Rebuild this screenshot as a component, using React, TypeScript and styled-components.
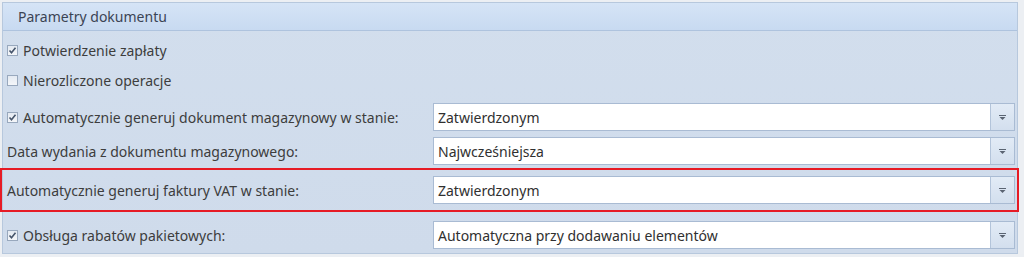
import React from "react";
import styled, { createGlobalStyle } from "styled-components";

const GlobalStyle = createGlobalStyle`
  html, body {
    margin: 0;
    padding: 0;
    background: #eceff3;
  }
  body {
    font-family: "Noto Sans", "Open Sans", sans-serif;
    font-size: 14px;
    color: #3d3d3d;
  }
`;

const Page = styled.div`
  width: 1024px;
  height: 257px;
  padding: 2px 0 0 2px;
  box-sizing: border-box;
`;

const Panel = styled.section`
  width: 1016px;
  height: 252px;
  box-sizing: border-box;
  border: 1px solid #b7c8dd;
  background: linear-gradient(180deg, #d2deed 0%, #cfdbeb 100%);
  display: flex;
  flex-direction: column;
`;

const Header = styled.div`
  height: 28px;
  box-sizing: border-box;
  padding-left: 15px;
  display: flex;
  align-items: center;
  background: linear-gradient(180deg, #d5e4f6 0%, #c8daf1 100%);
  border-bottom: 1px solid #aec3de;
  font-size: 14px;
  color: #3b4454;
`;

const Body = styled.div`
  display: flex;
  flex-direction: column;
  padding-top: 4px;
`;

interface RowProps {
  h: number;
  highlighted?: boolean;
}

const Row = styled.div<RowProps>`
  height: ${(p) => p.h}px;
  box-sizing: border-box;
  display: grid;
  grid-template-columns: 430px 1fr;
  align-items: center;
  padding-right: 2px;
  ${(p) =>
    p.highlighted &&
    `
    border: 2px solid #e61b25;
    margin: 0 -2px 0 -3px;
    padding-right: 2px;
    padding-left: 1px;
  `}
`;

const Label = styled.label`
  display: flex;
  align-items: center;
  gap: 5px;
  padding-left: 4px;
  font-size: 14px;
  white-space: nowrap;
`;

const Check = styled.span`
  width: 11px;
  height: 11px;
  box-sizing: border-box;
  border: 1px solid #98a8bd;
  background: linear-gradient(180deg, #e4eaf2 0%, #f4f6f9 100%);
  display: inline-flex;
  align-items: center;
  justify-content: center;
`;

const Combo = styled.div`
  height: 28px;
  box-sizing: border-box;
  border: 1px solid #a9bbd3;
  background: #fff;
  display: flex;
  align-items: stretch;
`;

const ComboText = styled.div`
  flex: 1;
  display: flex;
  align-items: center;
  padding-left: 4px;
  font-size: 14px;
  color: #303030;
  white-space: nowrap;
`;

const DropButton = styled.div`
  width: 23px;
  border-left: 1px solid #b3c4da;
  background: linear-gradient(180deg, #e2ebf6 0%, #d3dfee 100%);
  display: flex;
  align-items: center;
  justify-content: center;
`;

const CheckMark = () => (
  <svg width="9" height="9" viewBox="0 0 9 9">
    <path d="M1.5 4.5 L3.5 6.8 L7.5 1.8" fill="none" stroke="#45546a" strokeWidth="1.6" />
  </svg>
);

const Arrow = () => (
  <svg width="7" height="5" viewBox="0 0 7 5">
    <rect x="0" y="0" width="7" height="1" fill="#5a6472" />
    <path d="M0.5 2 L6.5 2 L3.5 5 Z" fill="#5a6472" />
  </svg>
);

const Select = ({ value }: { value: string }) => (
  <Combo>
    <ComboText>{value}</ComboText>
    <DropButton>
      <Arrow />
    </DropButton>
  </Combo>
);

const Field = ({ text, checkbox, checked }: { text: string; checkbox?: boolean; checked?: boolean }) => (
  <Label>
    {checkbox && <Check>{checked && <CheckMark />}</Check>}
    {text}
  </Label>
);

const App = () => (
  <>
    <GlobalStyle />
    <Page>
      <Panel>
        <Header>Parametry dokumentu</Header>
        <Body>
          <Row h={30}>
            <Field text="Potwierdzenie zapłaty" checkbox checked />
          </Row>
          <Row h={30}>
            <Field text="Nierozliczone operacje" checkbox />
          </Row>
          <Row h={5} />
          <Row h={34}>
            <Field text="Automatycznie generuj dokument magazynowy w stanie:" checkbox checked />
            <Select value="Zatwierdzonym" />
          </Row>
          <Row h={34}>
            <Field text="Data wydania z dokumentu magazynowego:" />
            <Select value="Najwcześniejsza" />
          </Row>
          <Row h={44} highlighted>
            <Field text="Automatycznie generuj faktury VAT w stanie:" />
            <Select value="Zatwierdzonym" />
          </Row>
          <Row h={6} />
          <Row h={34}>
            <Field text="Obsługa rabatów pakietowych:" checkbox checked />
            <Select value="Automatyczna przy dodawaniu elementów" />
          </Row>
        </Body>
      </Panel>
    </Page>
  </>
);

export default App;
